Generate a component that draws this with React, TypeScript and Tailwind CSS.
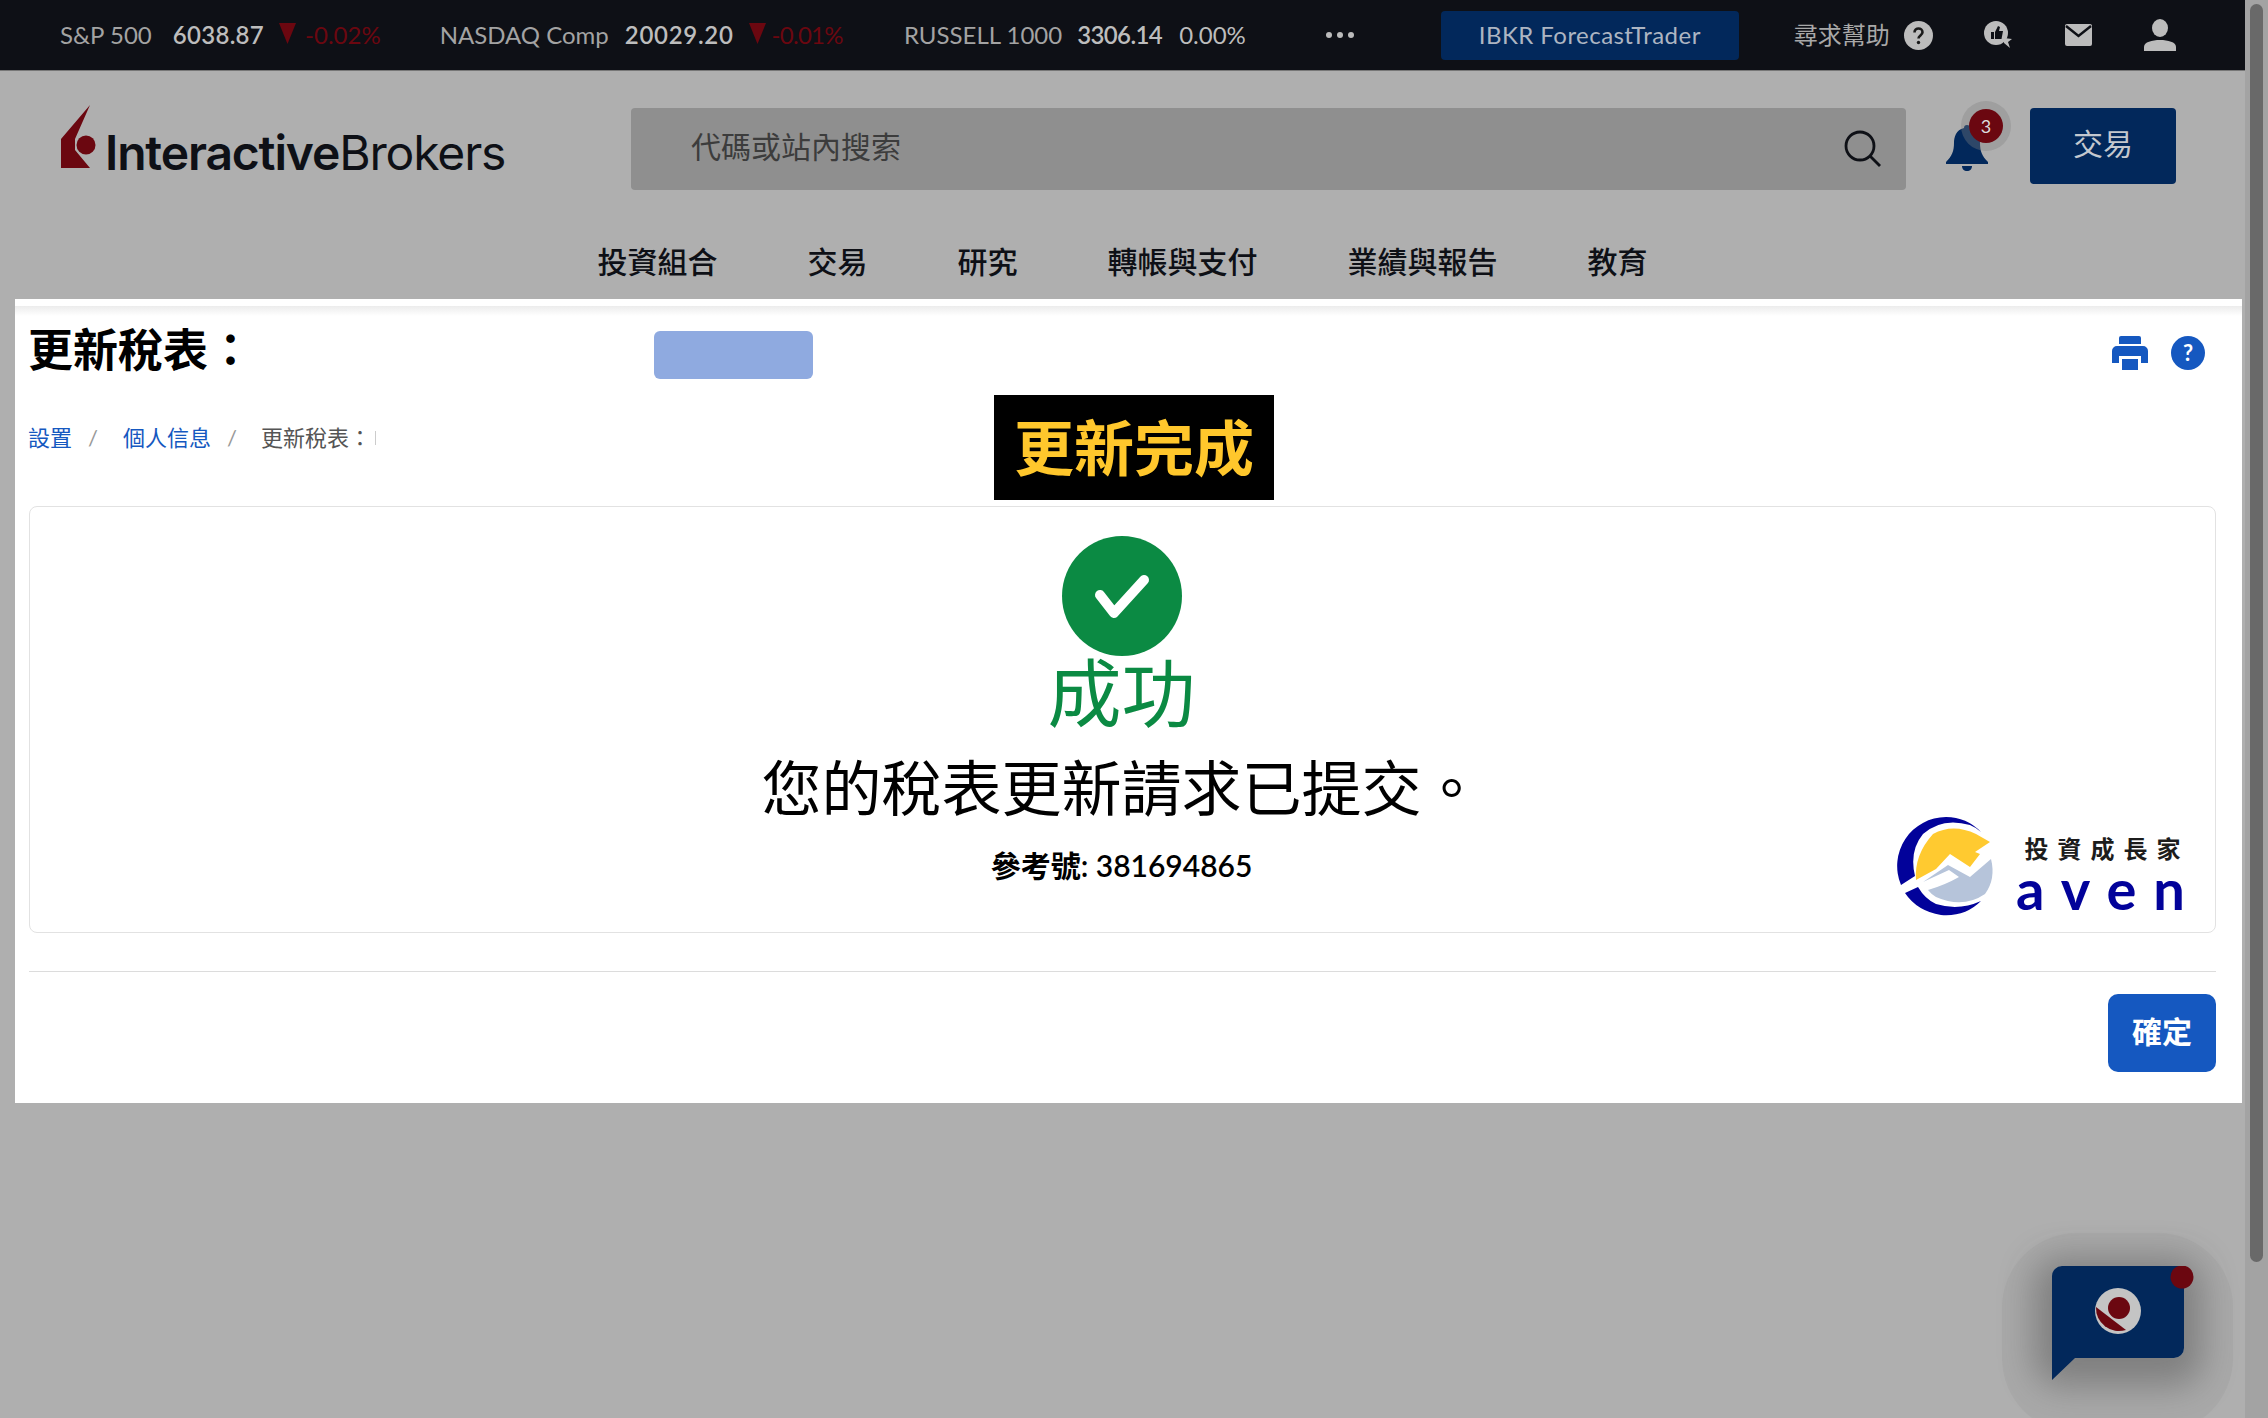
import React from 'react';

const sans = 'font-["Lato","Noto_Sans_CJK_TC",sans-serif]';

const Ticker = ({ name, value, change, down, gap = 'ml-[18px]', valueTrack = 'tracking-[0.7px]', changeClass = 'ml-[9px]' }: { name: string; value: string; change: string; down?: boolean; gap?: string; valueTrack?: string; changeClass?: string }) => (
    <div className="flex items-center text-[24px] leading-none whitespace-nowrap">
        <span className="text-[#a3a3a3]">{name}</span>
        <span className={`${gap} ${valueTrack} font-semibold text-[#bdbdbd]`}>{value}</span>
        {down && (
            <svg className="ml-[15px] mt-[-3px]" width="17" height="21" viewBox="0 0 17 21">
                <polygon points="0,0 17,0 8.500,21" fill="#6b0710" />
            </svg>
        )}
        <span className={down ? `${changeClass} text-[#6b0710]` : 'ml-[17px] text-[#bdbdbd]'}>{change}</span>
    </div>
);

const TopBar = () => (
    <div className="flex h-[71px] items-center bg-[#0e1016] pl-[60px] border-b border-[#777]">
        <Ticker name="S&P 500" value="6038.87" change="-0.02%" down gap="ml-[21px]" valueTrack="tracking-[0.3px]" />
        <div className="ml-[59px]">
            <Ticker name="NASDAQ Comp" value="20029.20" change="-0.01%" down gap="ml-[16px]" changeClass="ml-[6px] tracking-[-0.7px]" />
        </div>
        <div className="ml-[61px]">
            <Ticker name="RUSSELL 1000" value="3306.14" change="0.00%" gap="ml-[15px]" valueTrack="tracking-[-0.6px]" />
        </div>
        <div className="ml-[80px] flex gap-[5px]">
            <span className="size-[6px] rounded-full bg-[#bbb]" />
            <span className="size-[6px] rounded-full bg-[#bbb]" />
            <span className="size-[6px] rounded-full bg-[#bbb]" />
        </div>
        <div className="ml-[87px] flex h-[49px] w-[298px] items-center justify-center rounded-[4px] bg-[#02285b] text-[24px] tracking-[0.45px] text-[#adb5c2]">
            IBKR ForecastTrader
        </div>
        <span className="ml-[55px] text-[24px] text-[#a8a8a8]">尋求幫助</span>
        <svg className="ml-[14px]" width="29" height="29" viewBox="0 0 29 29">
            <circle cx="14.5" cy="14.5" r="14.5" fill="#bcbcbc" />
            <path d="M10.5 11.5c0-2.5 2-4 4-4s4 1.500 4 3.700c0 3.300-4 3.300-4 6.300" fill="none" stroke="#1a1a1a" strokeWidth="2.600" />
            <circle cx="14.500" cy="21.500" r="1.700" fill="#1a1a1a" />
        </svg>
        <svg className="ml-[50px]" width="30" height="30" viewBox="0 0 30 30">
            <circle cx="13" cy="13" r="12" fill="#bcbcbc" />
            <path d="M8 12h3v7H8zM12 12l3-6 2 1-1 4h4l-1.500 8H12z" fill="#0e1016" />
            <path d="M21 18l8 1-4 3 2 6-6-5z" fill="#bcbcbc" />
        </svg>
        <svg className="ml-[52px]" width="27" height="22" viewBox="0 0 27 22">
            <rect width="27" height="22" rx="2" fill="#bcbcbc" />
            <path d="M1 2l12.500 10L26 2" fill="none" stroke="#0e1016" strokeWidth="2.500" />
        </svg>
        <svg className="ml-[52px]" width="32" height="32" viewBox="0 0 32 32">
            <ellipse cx="16" cy="9" rx="8" ry="9" fill="#bcbcbc" />
            <path d="M0 32v-4c0-5 8-7 16-7s16 2 16 7v4z" fill="#bcbcbc" />
        </svg>
    </div>
);

const IbMark = () => (
    <svg width="35" height="64" viewBox="0 0 35 64">
        <path d="M29 0L0 34V63H29L14 45V34Z" fill="#6b0710" />
        <circle cx="25" cy="40" r="9.500" fill="#6b0710" />
    </svg>
);

const Header = () => (
    <div className="h-[228px] bg-[#afafaf]">
        <div className="flex items-start">
            <div className="ml-[61px] mt-[34px] flex w-[570px] items-end">
                <IbMark />
                <span className="ml-[9px] mb-[-12px] text-[48px] leading-[56px] tracking-[-1.15px] text-[#0e1016] font-['Inter',sans-serif]">
                    <span className="font-semibold">Interactive</span>Brokers
                </span>
            </div>
            <div className="mt-[37px] flex h-[82px] w-[1275px] items-center justify-between rounded-[4px] bg-[#8f8f8f] pl-[60px] pr-[24px]">
                <span className="mb-[5px] text-[30px] text-[#3c3c3c]">代碼或站內搜索</span>
                <svg width="38" height="38" viewBox="0 0 38 38" fill="none" stroke="#0e1016" strokeWidth="2.800">
                    <circle cx="16" cy="16" r="14" />
                    <path d="M26 26l10 10" />
                </svg>
            </div>
            <div className="relative ml-[40px] mt-[54px]">
                <svg width="42" height="46" viewBox="0 0 42 46">
                    <path d="M21 0c2 0 3 1 3 3 8 2 10 9 10 15 0 8 2 13 8 19v2H0v-2c6-6 8-11 8-19C8 12 10 5 18 3c0-2 1-3 3-3z" fill="#02285b" />
                    <path d="M16 41h10c0 3-2 5-5 5s-5-2-5-5z" fill="#02285b" />
                </svg>
                <span className="absolute left-[23px] top-[-16px] flex size-[34px] items-center justify-center rounded-full bg-[#6b0710] text-[18px] text-[#ddd] shadow-[0_0_0_8px_rgba(130,130,130,0.35)]">
                    3
                </span>
            </div>
            <div className="ml-[42px] mt-[37px] flex h-[76px] w-[146px] items-center justify-center rounded-[4px] bg-[#02285b] pb-[5px] text-[30px] text-[#c4c8cf]">
                交易
            </div>
        </div>
        <nav className="mt-[49px] flex justify-center gap-[90px] text-[30px] font-medium leading-[44px] text-[#0e1016]">
            <span>投資組合</span>
            <span>交易</span>
            <span>研究</span>
            <span>轉帳與支付</span>
            <span>業績與報告</span>
            <span>教育</span>
        </nav>
    </div>
);

const AvenLogo = () => (
    <div className="absolute left-[1867px] top-[310px] flex items-start">
        <svg width="100" height="100" viewBox="0 0 100 100">
            <path d="M84 15A49 49 0 0 0 49 0 A49 49 0 0 0 4 68L18 59Q12 34 26 17 Q45 0 73 8Q80 11 84 15Z" fill="#02029a" />
            <path d="M8 76Q20 94 44 98 Q68 100 84 84 Q62 94 39 87 Q28 82 21 70Z" fill="#02029a" />
            <path d="M19 63Q17 38 36 17 Q56 6 79 17L93 25 78 35 83 37 73 50 53 37 39 52Z" fill="#ffca30" />
            <path d="M26 65L51 48 73 60 94 42Q99 62 88 77 Q66 92 39 80 Q34 77 31 73Q48 68 62 60 L52 53Z" fill="#b6c4da" />
        </svg>
        <div className="ml-[19px] mt-[16px] flex flex-col">
            <span className="ml-[-4px] text-[24px] font-bold leading-[32px] tracking-[9px] text-[#1c1c1c]">投資成長家</span>
            <span className="text-[56px] font-bold leading-[48px] tracking-[17px] text-[#02029a] font-['Lato',sans-serif]">aven</span>
        </div>
    </div>
);

const Panel = () => (
    <div className="relative ml-[15px] mr-[3px] h-[804px] bg-white pl-[14px] pr-[26px]">
        <div className="absolute inset-x-0 top-[7px] h-[10px] bg-gradient-to-b from-[#ececec] to-white" />
        <div className="relative flex h-[102px] items-center justify-between">
            <h1 className="ml-[-1px] text-[45px] font-bold leading-none text-black">更新稅表：</h1>
            <div className="mr-[11px] mt-[5px] flex items-center gap-[23px]">
                <svg width="36" height="34" viewBox="0 0 36 34" fill="#1558c0">
                    <path d="M9 0h18a2 2 0 0 1 2 2v6H7V2a2 2 0 0 1 2-2z" />
                    <path d="M5 10h26a5 5 0 0 1 5 5v12h-7v-7H7v7H0V15a5 5 0 0 1 5-5z" />
                    <path d="M10 23h16v11H10z" />
                </svg>
                <span className="flex size-[34px] items-center justify-center rounded-full bg-[#1558c0] text-[22px] font-bold text-white">?</span>
            </div>
        </div>
        <div className="ml-[-1px] flex h-[74px] items-center text-[22px] leading-none">
            <span className="text-[#1558c0]">設置</span>
            <span className="ml-[16px] text-[#999]">/</span>
            <span className="ml-[25px] text-[#1558c0]">個人信息</span>
            <span className="ml-[16px] text-[#999]">/</span>
            <span className="ml-[24px] text-[#555]">更新稅表：</span>
            <span className="ml-[4px] h-[14px] w-px bg-[#ccc]" />
        </div>
        <div className="relative mt-[31px] flex h-[427px] flex-col items-center rounded-[8px] border border-[#e2e2e2] pt-[29px] pr-[2px] text-center">
            <svg width="120" height="120" viewBox="0 0 120 120">
                <circle cx="60" cy="60" r="60" fill="#0b8a43" />
                <path d="M38 59l14 18 30-33" fill="none" stroke="#fff" strokeWidth="10" strokeLinecap="round" strokeLinejoin="round" />
            </svg>
            <div className="mt-[-2px] h-[80px] text-[74px] leading-[78px] text-[#0b8a43]">成功</div>
            <div className="h-[108px] text-[60px] leading-[108px] text-black">您的稅表更新請求已提交。</div>
            <div className="h-[46px] text-[30px] font-semibold leading-[46px] text-black">參考號: 381694865</div>
            <AvenLogo />
        </div>
        <div className="mt-[38px] h-px bg-[#dcdcdc]" />
        <div className="mt-[22px] flex justify-end">
            <div className="flex h-[78px] w-[108px] items-center justify-center rounded-[10px] bg-[#1558c0] pb-[4px] text-[30px] font-bold text-white">
                確定
            </div>
        </div>
    </div>
);

const ChatWidget = () => (
    <div className="absolute left-[2052px] top-[1266px]">
        <div className="absolute left-[-50px] top-[-33px] h-[200px] w-[231px] rounded-[75px] bg-[#a9a9a9]" />
        <div className="absolute left-0 top-0 h-[92px] w-[132px] rounded-[10px] shadow-[0_10px_34px_18px_rgba(60,60,60,0.38)]" />
        <svg className="relative" width="142" height="116" viewBox="0 0 142 116">
            <path d="M10 0H132V82a10 10 0 0 1-10 10H23L0 114V10A10 10 0 0 1 10 0z" fill="#02285b" />
            <circle cx="66" cy="45" r="23" fill="#c4c4c4" />
            <path d="M44 41L74 64A23 23 0 0 1 44 41z" fill="#6b0710" />
            <circle cx="67" cy="42" r="11" fill="#6b0710" />
            <circle cx="130" cy="11" r="11.500" fill="#6b0710" />
        </svg>
    </div>
);

export default function App() {
    return (
        <div className={`relative flex h-[1418px] w-full overflow-hidden bg-[#afafaf] ${sans}`}>
            <div className="min-w-0 flex-1">
                <TopBar />
                <Header />
                <Panel />
            </div>
            <div className="flex w-[23px] shrink-0 justify-center bg-[#a3a3a3] pt-[4px]">
                <div className="h-[1258px] w-[13px] rounded-full bg-[#696969]" />
            </div>
            <div className="absolute left-[654px] top-[331px] h-[48px] w-[159px] rounded-[6px] bg-[#8faae0]" />
            <div className="absolute left-[994px] top-[395px] flex h-[105px] w-[280px] items-center justify-center bg-black text-[60px] font-bold leading-none text-[#ffc72c]">
                更新完成
            </div>
            <ChatWidget />
        </div>
    );
}
